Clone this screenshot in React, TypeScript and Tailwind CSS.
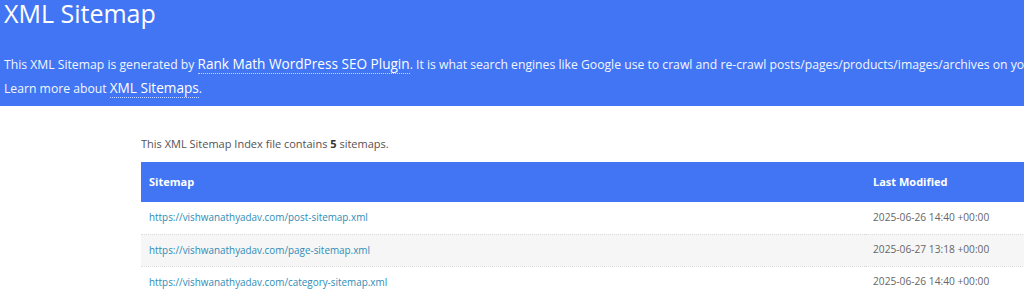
const ROWS = [
  { loc: "https://vishwanathyadav.com/post-sitemap.xml", mod: "2025-06-26 14:40 +00:00" },
  { loc: "https://vishwanathyadav.com/page-sitemap.xml", mod: "2025-06-27 13:18 +00:00" },
  { loc: "https://vishwanathyadav.com/category-sitemap.xml", mod: "2025-06-26 14:40 +00:00" },
];

export default function App() {
  return (
    <div className="h-[293px] w-[1024px] overflow-hidden bg-white font-['Open_Sans',sans-serif] text-[#545353]">
      {/* Header */}
      <header className="h-[106px] bg-[#4275f4] px-[4px] text-white">
        <h1 className="whitespace-nowrap text-[25px] leading-[26px]">XML Sitemap</h1>
        <div className="mt-[26px] whitespace-nowrap text-[12.2px] leading-[23px] text-[#f2f5ff]">
          <p>
            This XML Sitemap is generated by{" "}
            <a className="border-b border-dotted border-white/70 text-[13.6px] text-white">
              Rank Math WordPress SEO Plugin
            </a>
            . It is what search engines like Google use to crawl and re-crawl
            posts/pages/products/images/archives on your website.
          </p>
          <p>
            Learn more about{" "}
            <a className="border-b border-dotted border-white/70 text-[13.6px] text-white">
              XML Sitemaps
            </a>
            .
          </p>
        </div>
      </header>

      {/* Content */}
      <div className="pl-[141px]">
        <p className="pt-[30px] text-[11px] leading-[16px]">
          This XML Sitemap Index file contains <strong className="font-bold text-[#333]">5</strong> sitemaps.
        </p>
        <table className="mt-[10px] w-[1000px] border-collapse text-left">
          <thead>
            <tr className="h-[40px] bg-[#4275f4] text-[11px] text-white">
              <th className="w-[724px] pl-[8px] font-bold">Sitemap</th>
              <th className="pl-[8px] font-bold">Last Modified</th>
            </tr>
          </thead>
          <tbody>
            {ROWS.map((r, i) => (
              <tr
                key={r.loc}
                className={`h-[32px] border-b border-dotted border-[#dcdcdc] ${i % 2 === 1 ? "bg-[#f6f6f6]" : "bg-white"}`}
              >
                <td className="pl-[8px] text-[9.9px] text-[#2f8cb6]">
                  <a>{r.loc}</a>
                </td>
                <td className="pl-[8px] text-[10.2px] text-[#666]">{r.mod}</td>
              </tr>
            ))}
          </tbody>
        </table>
      </div>
    </div>
  );
}
